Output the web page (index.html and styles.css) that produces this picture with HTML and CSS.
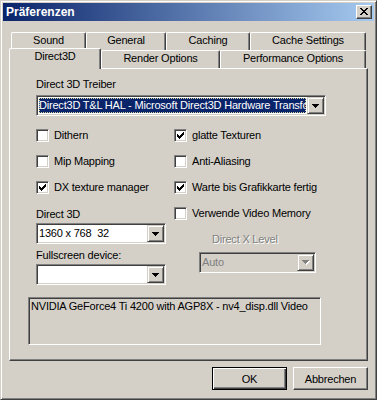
FILE: index.html
```html
<!DOCTYPE html>
<html lang="de">
<head>
  <meta charset="UTF-8">
  <title>Präferenzen</title>
  <link rel="stylesheet" href="styles.css">
</head>
<body>
  <div class="window">
    <div class="titlebar">
      <span class="title">Präferenzen</span>
      <div class="close">
        <svg width="8" height="7" viewBox="0 0 8 7"><path d="M0 0h2v1H0zM6 0h2v1H6zM1 1h2v1H1zM5 1h2v1H5zM2 2h4v1H2zM3 3h2v1H3zM2 4h4v1H2zM1 5h2v1H1zM5 5h2v1H5zM0 6h2v1H0zM6 6h2v1H6z" fill="#000"/></svg>
      </div>
    </div>

    <div class="content">
      <!-- Reiter in zwei Reihen -->
      <div class="tabs">
        <div class="tab-row back">
          <div class="tab tab-sound">Sound</div>
          <div class="tab tab-general">General</div>
          <div class="tab tab-caching">Caching</div>
          <div class="tab tab-cache">Cache Settings</div>
        </div>
        <div class="tab-row front">
          <div class="tab tab-d3d active">Direct3D</div>
          <div class="tab tab-render">Render Options</div>
          <div class="tab tab-perf">Performance Options</div>
        </div>
      </div>

      <div class="panel">
        <div class="field-label">Direct 3D Treiber</div>
        <div class="combo combo-wide">
          <span class="combo-value selected">Direct3D T&amp;L HAL - Microsoft Direct3D Hardware Transform</span>
          <span class="combo-btn"><svg width="7" height="4" viewBox="0 0 7 4"><path d="M0 0h7v1H0zM1 1h5v1H1zM2 2h3v1H2zM3 3h1v1H3z" fill="#000"/></svg></span>
        </div>

        <div class="options">
          <div class="col">
            <div class="checks">
              <div class="check"><span class="box"></span>Dithern</div>
              <div class="check"><span class="box"></span>Mip Mapping</div>
              <div class="check"><span class="box"><svg width="11" height="11" viewBox="0 0 11 11"><path d="M2 4h1v3H2zM3 5h1v3H3zM4 6h1v3H4zM5 5h1v3H5zM6 4h1v3H6zM7 3h1v3H7zM8 2h1v3H8z" fill="#000"/></svg></span>DX texture manager</div>
            </div>
            <div class="field-label label-d3d">Direct 3D</div>
            <div class="combo combo-small">
              <span class="combo-value">1360 x 768  32</span>
              <span class="combo-btn"><svg width="7" height="4" viewBox="0 0 7 4"><path d="M0 0h7v1H0zM1 1h5v1H1zM2 2h3v1H2zM3 3h1v1H3z" fill="#000"/></svg></span>
            </div>
            <div class="field-label label-fullscreen">Fullscreen device:</div>
            <div class="combo combo-small">
              <span class="combo-value"></span>
              <span class="combo-btn"><svg width="7" height="4" viewBox="0 0 7 4"><path d="M0 0h7v1H0zM1 1h5v1H1zM2 2h3v1H2zM3 3h1v1H3z" fill="#000"/></svg></span>
            </div>
          </div>

          <div class="col">
            <div class="checks">
              <div class="check"><span class="box"><svg width="11" height="11" viewBox="0 0 11 11"><path d="M2 4h1v3H2zM3 5h1v3H3zM4 6h1v3H4zM5 5h1v3H5zM6 4h1v3H6zM7 3h1v3H7zM8 2h1v3H8z" fill="#000"/></svg></span>glatte Texturen</div>
              <div class="check"><span class="box"></span>Anti-Aliasing</div>
              <div class="check"><span class="box"><svg width="11" height="11" viewBox="0 0 11 11"><path d="M2 4h1v3H2zM3 5h1v3H3zM4 6h1v3H4zM5 5h1v3H5zM6 4h1v3H6zM7 3h1v3H7zM8 2h1v3H8z" fill="#000"/></svg></span>Warte bis Grafikkarte fertig</div>
              <div class="check"><span class="box"></span>Verwende Video Memory</div>
            </div>
            <div class="field-label disabled label-dx">Direct X Level</div>
            <div class="combo combo-dx disabled">
              <span class="combo-value">Auto</span>
              <span class="combo-btn"><svg width="8" height="5" viewBox="0 0 8 5"><path d="M1 1h7v1H1zM2 2h5v1H2zM3 3h3v1H3zM4 4h1v1H4z" fill="#fff"/><path d="M0 0h7v1H0zM1 1h5v1H1zM2 2h3v1H2zM3 3h1v1H3z" fill="#808080"/></svg></span>
            </div>
          </div>
        </div>

        <div class="info">NVIDIA GeForce4 Ti 4200 with AGP8X - nv4_disp.dll Video</div>
      </div>

      <div class="buttons">
        <div class="btn default">OK</div>
        <div class="btn">Abbrechen</div>
      </div>
    </div>
  </div>
</body>
</html>
```

FILE: styles.css
```css
* {
  box-sizing: border-box;
}

html, body {
  margin: 0;
  padding: 0;
  background: #d4d0c8;
}

body {
  font-family: "Liberation Sans", Arial, sans-serif;
  font-size: 11px;
  letter-spacing: -0.2px;
  color: #000;
}

.window {
  width: 377px;
  height: 400px;
  background: #d4d0c8;
  border: 1px solid;
  border-color: #d4d0c8 #404040 #404040 #d4d0c8;
  box-shadow: inset 1px 1px #fff, inset -1px -1px #808080;
  padding: 2px;
}

/* Titelleiste */
.titlebar {
  height: 18px;
  background: linear-gradient(to right, #0a246a, #a6caf0);
  display: flex;
  align-items: center;
  justify-content: space-between;
  padding: 0 2px 0 3px;
}

.title {
  color: #fff;
  font-weight: bold;
  font-size: 12px;
  letter-spacing: 0;
}

.close {
  width: 16px;
  height: 14px;
  background: #d4d0c8;
  border: 1px solid;
  border-color: #fff #404040 #404040 #fff;
  box-shadow: inset -1px -1px #808080;
  padding: 2px 0 0 3px;
}

.close svg {
  display: block;
}

.content {
  padding: 11px 6px 0 6px;
}

/* Reiter */
.tab-row {
  display: flex;
}

.tab-row.back {
  margin-left: 2px;
}

.tab-row.front {
  margin-top: -2px;
  align-items: flex-end;
}

.tab {
  height: 18px;
  border: 1px solid;
  border-bottom: none;
  border-color: #fff #404040 #404040 #fff;
  border-radius: 2px 2px 0 0;
  box-shadow: inset -1px 0 #808080;
  background: #d4d0c8;
  text-align: center;
  line-height: 13px;
  padding-top: 1px;
  white-space: nowrap;
}

.tab-sound { width: 75px; }
.tab-general { width: 80px; }
.tab-caching { width: 84px; }
.tab-cache { width: 116px; }
.tab-d3d { width: 92px; }
.tab-render { width: 119px; }
.tab-perf { width: 146px; }

.tab.active {
  height: 21px;
  margin-bottom: -1px;
  position: relative;
  z-index: 1;
}

/* Inhalt des Reiters */
.panel {
  height: 293px;
  border: 1px solid;
  border-color: #fff #404040 #404040 #fff;
  box-shadow: inset -1px -1px #808080;
  padding: 9px 0 0 26px;
}

.field-label {
  line-height: 13px;
  white-space: nowrap;
}

.field-label.disabled {
  color: #808080;
  text-shadow: 1px 1px #fff;
}

.combo {
  height: 21px;
  display: flex;
  padding: 1px;
  background: #fff;
  border: 1px solid;
  border-color: #808080 #fff #fff #808080;
  box-shadow: inset 1px 1px #404040, inset -1px -1px #d4d0c8;
}

.combo-wide {
  width: 290px;
  margin-top: 4px;
}

.combo-small {
  width: 130px;
  margin-top: 2px;
}

.combo-dx {
  width: 117px;
  margin-top: 6px;
  margin-left: 25px;
}

.combo.disabled {
  background: #d4d0c8;
}

.combo-value {
  flex: 1;
  margin: 1px;
  line-height: 15px;
  white-space: pre;
  overflow: hidden;
}

.combo-value.selected {
  background: #0a246a;
  color: #fff;
  outline: 1px dotted #d8d4a0;
  outline-offset: -1px;
}

.combo.disabled .combo-value {
  color: #808080;
}

.combo-btn {
  width: 17px;
  height: 17px;
  background: #d4d0c8;
  border: 1px solid;
  border-color: #d4d0c8 #404040 #404040 #d4d0c8;
  box-shadow: inset 1px 1px #fff, inset -1px -1px #808080;
  display: flex;
  align-items: center;
  justify-content: center;
}

.combo-btn svg {
  display: block;
}

.options {
  display: grid;
  grid-template-columns: 138px 1fr;
  margin-top: 13px;
}

.checks {
  display: flex;
  flex-direction: column;
  gap: 13px;
}

.check {
  display: flex;
  align-items: center;
  gap: 5px;
  height: 13px;
  line-height: 13px;
  white-space: nowrap;
}

.box {
  width: 13px;
  height: 13px;
  flex: none;
  background: #fff;
  border: 1px solid;
  border-color: #808080 #fff #fff #808080;
  box-shadow: inset 1px 1px #404040, inset -1px -1px #d4d0c8;
}

.box svg {
  display: block;
}

.label-d3d {
  margin-top: 14px;
}

.label-fullscreen {
  margin-top: 5px;
}

.label-dx {
  margin-top: 13px;
  margin-left: 38px;
}

.info {
  width: 293px;
  height: 48px;
  margin: 12px 0 0 -8px;
  padding: 2px;
  line-height: 13px;
  white-space: nowrap;
  overflow: hidden;
  border: 1px solid;
  border-color: #808080 #fff #fff #808080;
  box-shadow: inset 1px 1px #404040, inset -1px -1px #d4d0c8;
}

/* Schaltflächen */
.buttons {
  display: flex;
  justify-content: flex-end;
  gap: 6px;
  margin-top: 6px;
}

.btn {
  width: 75px;
  height: 23px;
  border: 1px solid;
  border-color: #fff #404040 #404040 #fff;
  box-shadow: inset -1px -1px #808080;
  display: flex;
  align-items: center;
  justify-content: center;
}

.btn.default {
  border-color: #000;
  box-shadow: inset 1px 1px #fff, inset -1px -1px #404040, inset -2px -2px #808080;
}
```
